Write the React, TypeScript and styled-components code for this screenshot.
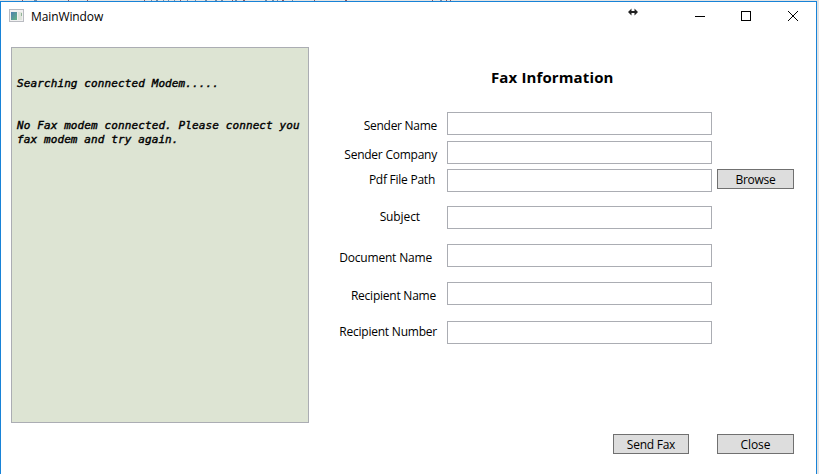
import React from "react";
import styled, { createGlobalStyle } from "styled-components";

const GlobalStyle = createGlobalStyle`
  * { box-sizing: border-box; }
  html, body { margin: 0; background: #dcdcdc; overflow: hidden; }
  body { font-family: "Open Sans", "Noto Sans", sans-serif; font-size: 12px; color: #000; }
`;

const Desktop = styled.div`
  width: 819px;
  height: 474px;
  display: flex;
  flex-direction: column;
  background: #e4e4e4;
  overflow: hidden;
`;

const BackdropLine = styled.svg`
  display: block;
  flex: none;
`;

const Window = styled.main`
  width: 817px;
  height: 473px;
  display: flex;
  flex-direction: column;
  background: #fff;
  border: 1px solid #1883d7;
  border-bottom: 0;
`;

const TitleBar = styled.header`
  height: 30px;
  flex: none;
  display: flex;
  padding-left: 8px;
`;

const AppIcon = styled.svg`
  display: block;
  margin-top: 7px;
  flex: none;
`;

const WindowTitle = styled.h1`
  margin: 5px 0 0 6px;
  flex: 1;
  font-size: 12px;
  line-height: 20px;
  font-weight: 400;
  letter-spacing: -0.1px;
`;

const Caption = styled.svg`
  display: block;
  flex: none;
`;

const Content = styled.div`
  flex: 1;
  display: flex;
  padding: 15px 0 0 10px;
`;

const LogPanel = styled.section`
  width: 298px;
  height: 376px;
  flex: none;
  padding: 29px 0 0 5px;
  background: #dde4d3;
  border: 1px solid #abadb3;
  font: italic 400 11px/14px "DejaVu Sans Mono", monospace;
  letter-spacing: 0.11px;
  -webkit-text-stroke: 0.4px #000;
`;

const LogLine = styled.p`
  margin: 0 0 28px;
  white-space: pre-line;
`;

const Form = styled.form`
  width: 485px;
  display: flex;
  flex-direction: column;
`;

const Heading = styled.h2`
  margin: 18px 0 0 182px;
  height: 24px;
  font-size: 15px;
  line-height: 24px;
  font-weight: 700;
  letter-spacing: 0.13px;
`;

const Row = styled.div<{ $gap: number }>`
  height: 23px;
  margin-top: ${(p) => p.$gap}px;
  display: flex;
  align-items: flex-start;
`;

const Label = styled.label<{ $end: number; $drop: number; $tracking: number }>`
  width: 138px;
  flex: none;
  padding: ${(p) => p.$drop}px ${(p) => p.$end}px 0 0;
  line-height: 20px;
  text-align: right;
  white-space: nowrap;
  letter-spacing: ${(p) => p.$tracking}px;
`;

const Input = styled.input`
  width: 265px;
  height: 23px;
  flex: none;
  padding: 0 3px;
  border: 1px solid #abadb3;
  border-radius: 0;
  background: #fff;
  font: inherit;
  outline: none;
`;

const Button = styled.button<{ $width: number; $tracking?: number }>`
  width: ${(p) => p.$width}px;
  height: 20px;
  flex: none;
  padding: 1px 0 0;
  border: 1px solid #707070;
  border-radius: 0;
  background: #ddd;
  color: #000;
  font: inherit;
  line-height: 17px;
  letter-spacing: ${(p) => p.$tracking ?? 0}px;
`;

const BrowseButton = styled(Button)`
  margin-left: 5px;
`;

const Actions = styled.footer`
  display: flex;
  justify-content: flex-end;
  gap: 28px;
  margin-top: 90px;
`;

const fields = [
  { id: "sender", text: "Sender Name", gap: 23, end: 10, drop: 4, tracking: -0.28 },
  { id: "company", text: "Sender Company", gap: 6, end: 10, drop: 4, tracking: -0.24 },
  { id: "path", text: "Pdf File Path", gap: 5, end: 12, drop: 1, tracking: -0.25 },
  { id: "subject", text: "Subject", gap: 14, end: 27, drop: 1, tracking: -0.1 },
  { id: "document", text: "Document Name", gap: 15, end: 15, drop: 4, tracking: -0.18 },
  { id: "recipient", text: "Recipient Name", gap: 15, end: 11, drop: 4, tracking: -0.23 },
  { id: "number", text: "Recipient Number", gap: 16, end: 10, drop: 1, tracking: -0.22 },
];

export default function App() {
  return (
    <>
      <GlobalStyle />
      <Desktop>
        <BackdropLine width="819" height="1" shapeRendering="crispEdges">
          <path d="M22 .5h1M68 .5h1M87 .5h1M144 .5h1M180 .5h1M232 .5h1M243 .5h2M282 .5h2M314 .5h1M345 .5h2M432 .5h1M446 .5h1M450 .5h1" stroke="#895b68" />
          <path d="M34 .5h3M151 .5h1M156 .5h2M163 .5h1M168 .5h1M174 .5h1M187 .5h1M195 .5h1M205 .5h2M215 .5h2M221 .5h2M235 .5h2M265 .5h2M272 .5h2M277 .5h1M292 .5h1M440 .5h2" stroke="#738ba8" />
        </BackdropLine>
        <Window>
          <TitleBar>
            <AppIcon width="16" height="16" viewBox="0 0 16 16" shapeRendering="crispEdges">
              <defs>
                <linearGradient id="pane" x2="1" y2="1">
                  <stop stopColor="#4b7fb0" />
                  <stop offset="1" stopColor="#64b483" />
                </linearGradient>
              </defs>
              <path d="M.5 .5h14v12H.5z" fill="#f1f1f1" stroke="#b9bbc1" />
              <path d="M2 3h6v8H2z" fill="url(#pane)" />
              <path d="M9 3h4v8H9z" fill="#dfe5dc" />
              <path d="M12 4h1v3h-1z" fill="#91b496" />
            </AppIcon>
            <WindowTitle>MainWindow</WindowTitle>
            <Caption width="190" height="30" viewBox="626 2 190 30">
              <path d="M629 12h8" stroke="#222" strokeWidth="2" />
              <path d="M628 12l3.5-3.5v7zM638 12l-3.5-3.5v7z" fill="#222" />
              <path d="M695 16.5h10M741.5 11.5h9v9h-9z" fill="none" stroke="#000" shapeRendering="crispEdges" />
              <path d="M788 11l10 10M798 11l-10 10" stroke="#000" />
            </Caption>
          </TitleBar>
          <Content>
            <LogPanel>
              <LogLine>Searching connected Modem.....</LogLine>
              <LogLine>{"No Fax modem connected. Please connect you\nfax modem and try again."}</LogLine>
            </LogPanel>
            <Form>
              <Heading>Fax Information</Heading>
              {fields.map((f) => (
                <Row key={f.id} $gap={f.gap}>
                  <Label htmlFor={f.id} $end={f.end} $drop={f.drop} $tracking={f.tracking}>{f.text}</Label>
                  <Input id={f.id} />
                  {f.id === "path" && <BrowseButton type="button" $width={77} $tracking={-0.25}>Browse</BrowseButton>}
                </Row>
              ))}
              <Actions>
                <Button type="button" $width={76} $tracking={-0.25}>Send Fax</Button>
                <Button type="button" $width={77} $tracking={-0.1}>Close</Button>
              </Actions>
            </Form>
          </Content>
        </Window>
      </Desktop>
    </>
  );
}
